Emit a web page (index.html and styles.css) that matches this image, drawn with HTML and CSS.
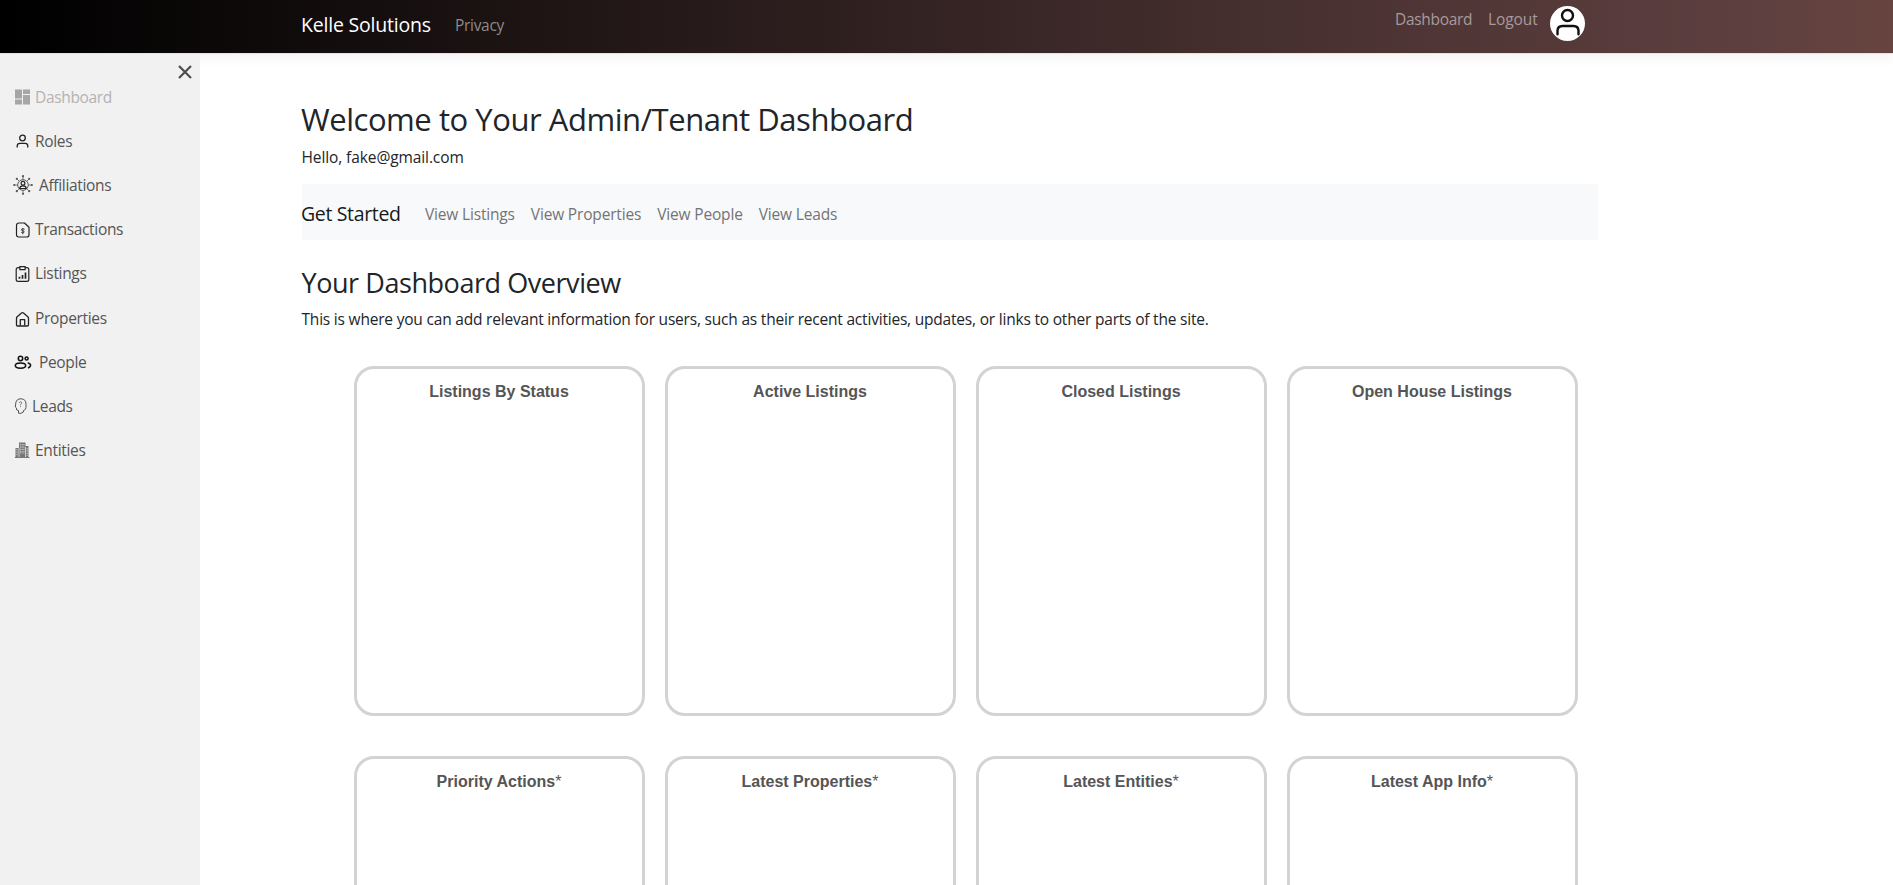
FILE: index.html
```html
<!DOCTYPE html>
<html lang="en">
<head>
<meta charset="utf-8">
<title>Dashboard - Kelle Solutions</title>
<link rel="stylesheet" href="styles.css">
</head>
<body>
<header class="topbar">
  <div class="topbar-inner">
    <a class="brand brand-light">Kelle Solutions</a>
    <a class="top-link privacy">Privacy</a>
    <nav class="account">
      <a class="top-link dash-link">Dashboard</a>
      <a class="top-link logout">Logout</a>
      <span class="avatar">
        <svg width="35" height="35" viewBox="0 0 35 35" fill="none" stroke="#111" stroke-width="2.4" stroke-linecap="round"><circle cx="17.5" cy="9.500" r="5.500"/><path d="M7.500 28.300v-3.300q0-5 5-5h11q5 0 5 5v3.300"/></svg>
      </span>
    </nav>
  </div>
</header>
<div class="shell">
  <aside class="sidebar">
    <div class="close-row"><svg width="14" height="14" viewBox="0 0 14 14" stroke="#4d4d4d" stroke-width="2.2"><path d="M1 1l12 12M13 1L1 13"/></svg></div>
    <nav class="menu">
      <a class="item active"><svg class="icon" viewBox="0 0 16 16" fill="#a6a6a6"><path d="M1 .5h7v9h-7zM1 10.500h7v5h-7zM9 .500h7v4.500h-7zM9 6h7v9.500h-7z"/></svg><span>Dashboard</span></a>
      <a class="item"><svg class="icon" viewBox="0 0 16 16" fill="none" stroke="#222" stroke-width="1.3" stroke-linecap="round"><circle cx="8.500" cy="5" r="2.800"/><path d="M3.200 14v-1q0-2.700 2.700-2.700h5.200q2.700 0 2.700 2.700v1"/></svg><span>Roles</span></a>
      <a class="item"><svg class="icon icon-network" viewBox="0 0 20 20" fill="none" stroke="#444" stroke-width=".9"><circle cx="10" cy="10" r="5.300"/><g stroke-width=".7"><path d="M10 4.500V1.500M10 18.500v-3M4.500 10h-3M18.500 10h-3M6 6L4 4M14 6l2-2M6 14l-2 2M14 14l2 2"/></g><g fill="#555" stroke="none"><circle cx="10" cy="1.200" r="1.100"/><circle cx="10" cy="18.800" r="1.100"/><circle cx="1.200" cy="10" r="1.100"/><circle cx="18.800" cy="10" r="1.100"/><circle cx="3.800" cy="3.800" r="1.100"/><circle cx="16.200" cy="3.800" r="1.100"/><circle cx="3.800" cy="16.200" r="1.100"/><circle cx="16.200" cy="16.200" r="1.100"/></g><circle cx="10" cy="8.300" r="1.900" stroke="#222" stroke-width="1.200"/><path d="M6.700 13.500q.2-2.700 3.300-2.700t3.300 2.700z" stroke="#222" stroke-width="1.200"/></svg><span>Affiliations</span></a>
      <a class="item"><svg class="icon icon-low" viewBox="0 0 16 16" fill="none" stroke="#222" stroke-width="1.200" stroke-linejoin="round"><path d="M5 1h5.500l4.500 4.300v7.500q0 2.200-2.200 2.200H4.700Q2.500 15 2.500 12.800V3.500Q2.500 1 5 1z"/><path d="M10.600 7.300Q8.500 6.200 7.500 7.300c-.8 1.800 3 .8 2.700 2.700-.3 1.200-2 1-3 .2M8.800 6v6.200" stroke-width=".8"/></svg><span>Transactions</span></a>
      <a class="item"><svg class="icon icon-low" viewBox="0 0 16 16" fill="none" stroke="#222" stroke-width="1.200"><path d="M5.600 1.700H4.100Q2.200 1.700 2.200 3.500v10q0 1.900 1.900 1.900h8.800q1.900 0 1.900-1.900v-10q0-1.800-1.900-1.800h-1.600M5.900.6h5.200v3H5.900z"/><path d="M5.500 12.800v-2M8.500 12.800V9M11.500 12.800V6.500" stroke-width="1.700"/></svg><span>Listings</span></a>
      <a class="item"><svg class="icon icon-low" viewBox="0 0 16 16" fill="none" stroke="#222" stroke-width="1.300" stroke-linejoin="round"><path d="M2.500 7.200q0-.8.700-1.400L7.500 2q1-.8 2 0l4.300 3.800q.7.600.7 1.400v6.600q0 1.200-1.200 1.200H3.700Q2.500 15 2.500 13.800z"/><path d="M6.300 14.500V8.700h4.400v5.800"/></svg><span>Properties</span></a>
      <a class="item"><svg class="icon icon-people" viewBox="0 0 18 16" fill="none" stroke="#111" stroke-width="1.500" stroke-linecap="round"><circle cx="6.500" cy="4.500" r="2.200"/><ellipse cx="6.500" cy="11.600" rx="5.200" ry="2.600"/><circle cx="12.600" cy="4.500" r="1.500"/><path d="M14.200 9q2.800.9 2.300 2.800-.4 1.400-2 1.900"/></svg><span>People</span></a>
      <a class="item"><svg class="icon icon-lead" viewBox="0 0 13 16" fill="none" stroke="#555" stroke-width="1"><path d="M4.500 15.200v-2.700Q2 12.800 2.300 9.800L1.300 9 1.800 5Q2.300.8 7 .8q5 .2 5 5.300v3.400q0 2.300-2.500 3l-.2 1.600L7 15.300z"/><path d="M5.200 5q.1-1.200 1.300-1.200 1.300 0 1.300 1.100 0 .9-1.300 1.500v1M6.500 8.200v.9" stroke-width=".7"/></svg><span>Leads</span></a>
      <a class="item"><svg class="icon" viewBox="0 0 16 16" fill="#777"><path d="M5 .5h6.500v15H5zM1.500 6H5v9.500H1.500zM11.500 4h3v11.500h-3z"/><path d="M.8 15h14.700v1H.8z"/><g stroke="#e6e6e6" stroke-width=".8"><path d="M6.600 2v10M8.200 2v10M9.900 2v10M3 7v7M13.200 6v8" stroke-dasharray="1.400 1"/><path d="M5 6v9M11.500 5v10"/></g></svg><span>Entities</span></a>
    </nav>
  </aside>
  <main class="content">
    <h1 class="title">Welcome to Your Admin/Tenant Dashboard</h1>
    <p class="hello">Hello, fake@gmail.com</p>
    <nav class="quickbar">
      <a class="brand get-started">Get Started</a>
      <a class="quick">View Listings</a>
      <a class="quick">View Properties</a>
      <a class="quick">View People</a>
      <a class="quick">View Leads</a>
    </nav>
    <h2 class="subtitle">Your Dashboard Overview</h2>
    <p class="intro">This is where you can add relevant information for users, such as their recent activities, updates, or links to other parts of the site.</p>
    <section class="cards">
      <article class="card">Listings By Status</article>
      <article class="card">Active Listings</article>
      <article class="card">Closed Listings</article>
      <article class="card">Open House Listings</article>
      <article class="card">Priority Actions<span class="star">*</span></article>
      <article class="card">Latest Properties<span class="star">*</span></article>
      <article class="card">Latest Entities<span class="star">*</span></article>
      <article class="card">Latest App Info<span class="star">*</span></article>
    </section>
  </main>
</div>
</body>
</html>
```
FILE: styles.css
```css
* { box-sizing: border-box; }
body {
  margin: 0;
  height: 885px;
  overflow: hidden;
  background: #fff;
  color: #212529;
  font: 15.5px/24px "Open Sans", "Noto Sans", sans-serif;
  letter-spacing: -.2px;
  white-space: nowrap;
}
h1, h2, p { margin: 0; font-weight: 400; }
.topbar {
  height: 54px;
  background: linear-gradient(to right, #000, #4f3535 75%, #5d3f40 92%, #67443f);
  background-clip: padding-box;
  border-bottom: 1px solid #e3e3e3;
  box-shadow: 0 4px 12px rgba(0, 0, 0, .05);
}
.topbar-inner { display: flex; align-items: center; width: 1585px; height: 52px; padding-left: 301px; }
.brand { font-size: 19.5px; line-height: 30px; letter-spacing: -.27px; }
.brand-light { width: 154px; color: #fff; margin-top: -2px; letter-spacing: -.2px; }
.top-link { color: #a79b9b; letter-spacing: -.3px; }
.privacy { color: #8e8a8a; margin-top: -2px; }
.account { display: flex; height: 52px; margin-left: auto; }
.account .top-link { padding-top: 7px; }
.dash-link { width: 93px; }
.logout { width: 62px; letter-spacing: -.1px; }
.avatar { width: 35px; height: 35px; margin-top: 6px; border-radius: 50%; background: #fff; }
.avatar svg { display: block; }
.shell { display: flex; height: 831px; overflow: hidden; }
.sidebar { width: 200px; flex: none; background: #f1f1f1; color: #555; letter-spacing: -.33px; }
.close-row { display: flex; justify-content: flex-end; align-items: flex-end; height: 25px; padding-right: 8px; }
.menu { padding-left: 14px; margin-top: -4px; }
.item { display: flex; align-items: center; gap: 5px; height: 44.1px; }
.active { color: #b3b3b3; }
.icon { width: 16px; height: 16px; flex: none; }
.icon-low { margin-top: 2px; }
.icon-network { width: 20px; height: 20px; margin: 0 1px 0 -1px; }
.icon-people { width: 18px; margin-right: 2px; }
.icon-lead { width: 13px; }
.content { padding: 46px 0 0 102px; }
.title { margin-left: -1px; font-size: 31px; line-height: 38px; letter-spacing: -.45px; }
.hello { margin-top: 7px; letter-spacing: -.1px; }
.hello, .intro { margin-left: -.5px; }
.quickbar { display: flex; align-items: center; width: 1296px; height: 56px; margin-top: 15px; padding-top: 3px; background: #f8f9fa; }
.get-started { width: 124px; margin-left: -1px; color: #17191b; letter-spacing: -.35px; }
.quick { color: #737475; margin-right: 16px; letter-spacing: -.17px; }
.subtitle { margin: 26px 0 0 -.5px; font-size: 27px; line-height: 34px; letter-spacing: -.44px; }
.intro { margin-top: 7px; }
.cards { display: grid; grid-template-columns: repeat(4, 291px); gap: 40px 20px; padding: 35px 0 0 52px; }
.card {
  height: 350px;
  padding: 11px 1px 0 0;
  border: 3px solid #d3d3d3;
  border-radius: 20px;
  color: #555;
  font: bold 16px/24px "Liberation Sans", Arial, sans-serif;
  letter-spacing: 0;
  text-align: center;
}
.star { font-weight: 400; }
```
